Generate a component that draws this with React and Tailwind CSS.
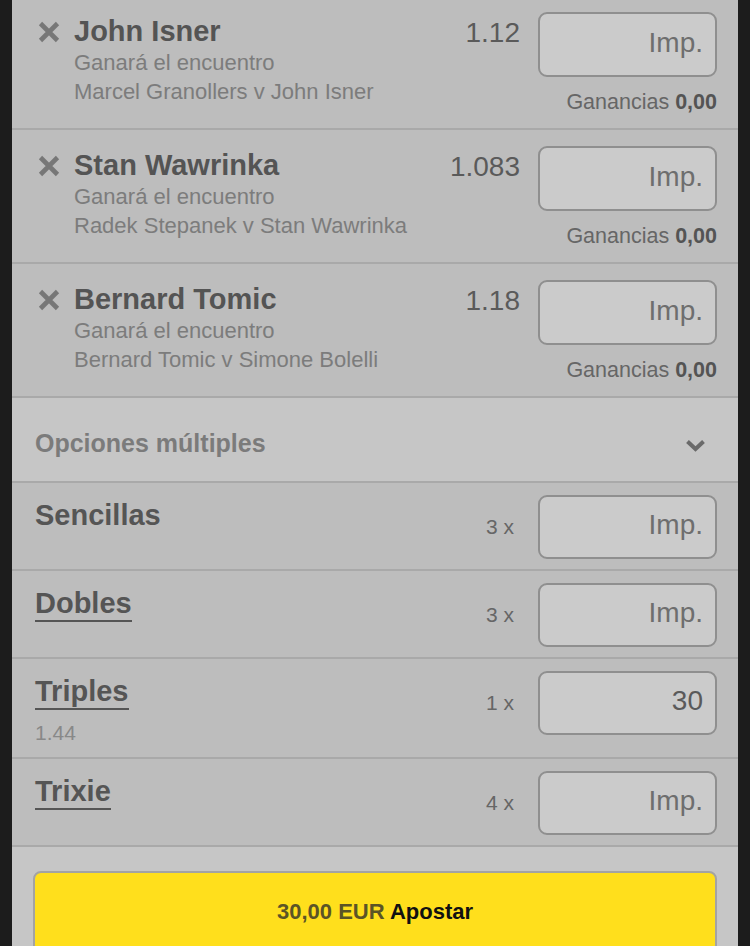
import React from "react";

const font = { fontFamily: '"Liberation Sans", Arial, sans-serif' };

// apuestas seleccionadas
const selections = [
  { name: "John Isner", odds: "1.12", match: "Marcel Granollers v John Isner" },
  { name: "Stan Wawrinka", odds: "1.083", match: "Radek Stepanek v Stan Wawrinka" },
  { name: "Bernard Tomic", odds: "1.18", match: "Bernard Tomic v Simone Bolelli" },
];

const multiples = [
  { name: "Sencillas", count: "3 x", value: "", underline: false },
  { name: "Dobles", count: "3 x", value: "", underline: true },
  { name: "Triples", count: "1 x", value: "30", underline: true, odds: "1.44" },
  { name: "Trixie", count: "4 x", value: "", underline: true },
];

function CloseIcon() {
  return (
    <svg width="24" height="24" viewBox="0 0 24 24" className="shrink-0 mt-[8px]">
      <path d="M3.5 3.5 20.5 20.5 M20.5 3.5 3.5 20.5" stroke="#777777" strokeWidth="4.6" strokeLinecap="butt" fill="none" />
    </svg>
  );
}

function StakeBox() {
  return (
    <div className="w-[179px] h-[65px] shrink-0 rounded-[9px] border-2 border-[#8f8f8f] bg-[#cbcbcb] flex items-center justify-end pr-[12px] pb-[4px]">
      <span className="text-[28px] text-[#6e6e6e]">Imp.</span>
    </div>
  );
}

function SelectionRow({ item }) {
  return (
    <div className="h-[134px] shrink-0 flex justify-between pl-[25px] pr-[21px] pt-[16px] border-b-2 border-[#a9a9a9]">
      <div className="flex gap-[13px]">
        <CloseIcon />
        <div className="flex flex-col mt-[8px]">
          <span className="text-[29px] leading-[22px] font-bold text-[#545454]">{item.name}</span>
          <span className="text-[22px] leading-[29px] mt-[6px] text-[#7c7c7c]">Ganará el encuentro</span>
          <span className="text-[22px] leading-[30px] text-[#7c7c7c]">{item.match}</span>
        </div>
      </div>
      <div className="flex flex-col items-end">
        <div className="flex items-start gap-[18px]">
          <span className="text-[28px] leading-[28px] mt-[7px] text-[#5a5a5a]">{item.odds}</span>
          <StakeBox />
        </div>
        <span className="text-[21.5px] leading-[24px] mt-[13px] text-[#666666]">
          Ganancias <span className="font-bold text-[#545454]">0,00</span>
        </span>
      </div>
    </div>
  );
}

function MultipleRow({ item }) {
  const tall = !!item.odds;
  return (
    <div
      className={
        "shrink-0 flex justify-between pl-[23px] pr-[21px] pt-[12px] border-b-2 border-[#a9a9a9] " +
        (tall ? "h-[100px]" : "h-[88px]")
      }
    >
      <div className="flex flex-col items-start">
        <span
          className={
            "text-[29px] leading-[32px] mt-[4px] font-bold text-[#555555] " +
            (item.underline ? "pb-[1px] border-b-2 border-[#555555]" : "")
          }
        >
          {item.name}
        </span>
        {item.odds && <span className="text-[21px] leading-[24px] mt-[11px] text-[#888888]">{item.odds}</span>}
      </div>
      <div className="flex items-center gap-[24px] h-[64px]">
        <span className="text-[21px] text-[#666666]">{item.count}</span>
        <div className="w-[179px] h-[64px] rounded-[9px] border-2 border-[#8f8f8f] bg-[#cbcbcb] flex items-center justify-end pr-[12px] pb-[4px]">
          <span className={"text-[28px] " + (item.value ? "text-[#5a5a5a]" : "text-[#6e6e6e]")}>
            {item.value || "Imp."}
          </span>
        </div>
      </div>
    </div>
  );
}

export default function App() {
  return (
    <div className="w-[750px] h-[946px] overflow-hidden bg-[#1c1c1c] flex" style={font}>
      <div className="ml-[12px] w-[726px] flex flex-col -mt-[4px] bg-[#bdbdbd]">
        {selections.map((s) => (
          <SelectionRow key={s.name} item={s} />
        ))}

        <div className="h-[85px] shrink-0 flex justify-between items-start pl-[23px] pr-[32px] pt-[30px] bg-[#c6c6c6] border-b-2 border-[#a9a9a9]">
          <span className="text-[25px] leading-[30px] font-bold text-[#7b7b7b]">Opciones múltiples</span>
          <svg width="21" height="13" viewBox="0 0 21 13" className="mt-[11px]">
            <path d="M2.5 2.5 10.5 10 18.5 2.5" stroke="#6a6a6a" strokeWidth="4" fill="none" />
          </svg>
        </div>

        {multiples.map((m) => (
          <MultipleRow key={m.name} item={m} />
        ))}

        <div className="flex-1 bg-[#c6c6c6] px-[21px] pt-[24px]">
          <button className="w-full h-[90px] rounded-[8px] border-2 border-[#a3a3a3] bg-[#ffdf1c] flex justify-center pt-[26px]">
            <span className="text-[22px] leading-[26px] font-bold">
              <span className="text-[#5b5426]">30,00 EUR</span> <span className="text-[#111111]">Apostar</span>
            </span>
          </button>
        </div>
      </div>
    </div>
  );
}
